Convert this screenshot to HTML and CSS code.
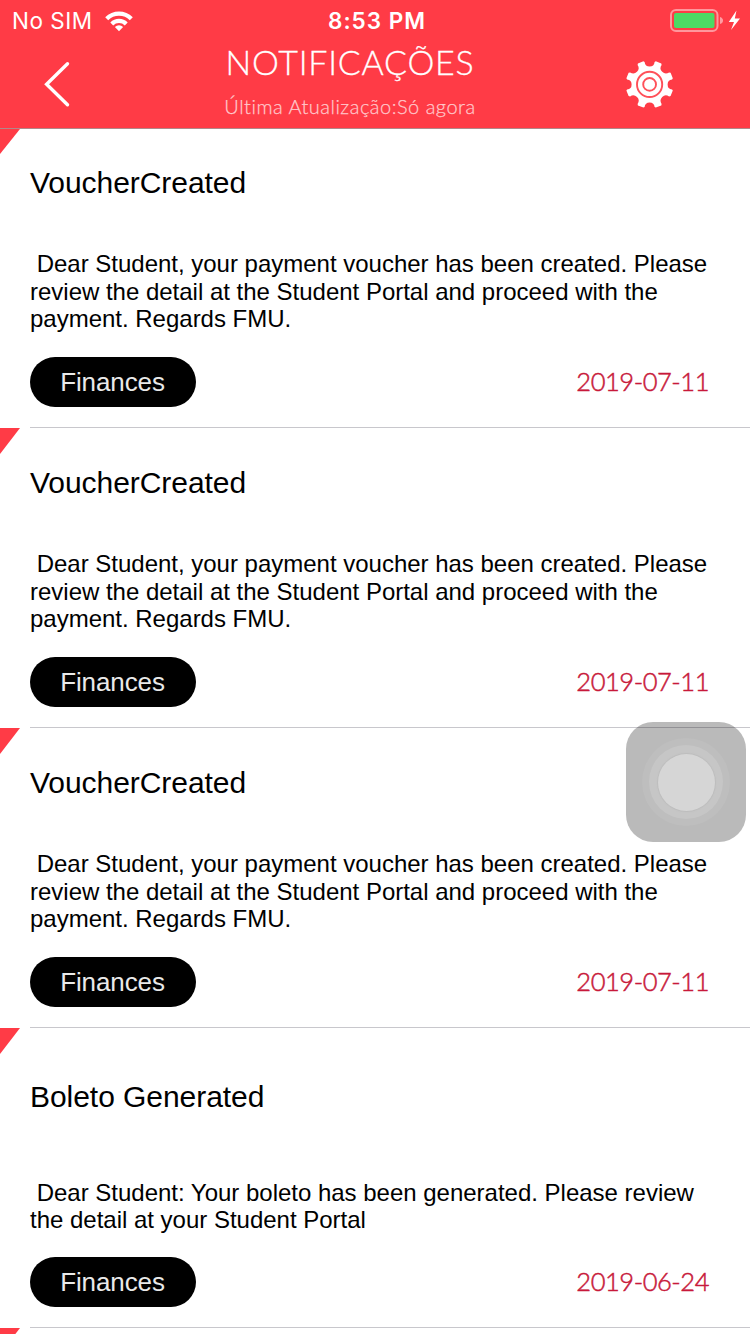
FILE: index.html
```html
<!DOCTYPE html>
<html lang="pt">
<head>
<meta charset="utf-8">
<title>Notificações</title>
<link rel="stylesheet" href="styles.css">
</head>
<body>
<div class="screen">
  <header class="header">
    <div class="status">
      <div class="carrier"><span>No SIM</span>
        <svg class="wifi" width="28" height="21" viewBox="0 0 28 21"><path d="M14 20.200L9.900 16a5.900 5.900 0 0 1 8.200 0zM5.300 11.400a12.400 12.400 0 0 1 17.400 0l-2.900 3a8.300 8.300 0 0 0-11.600 0zM.2 6.200a19.600 19.600 0 0 1 27.600 0l-3 3a15.300 15.300 0 0 0-21.600 0z" fill="#fff"/></svg>
      </div>
      <div class="time">8:53 PM</div>
      <svg class="battery" width="72" height="26" viewBox="0 0 72 26"><rect x="1" y="2" width="46.500" height="21" rx="5" fill="none" stroke="#fff" stroke-opacity=".47" stroke-width="2"/><rect x="4" y="5" width="40.500" height="15" rx="2" fill="#4cd964"/><path d="M50 9q3 1 3 3.500T50 16z" fill="#fff" fill-opacity=".5"/><path d="M66.500 2.500l-7.700 11.500h5.200l-3 8 9-11.400h-5.200z" fill="#fff"/></svg>
    </div>
    <div class="nav">
      <svg class="back" width="28" height="48" viewBox="0 0 28 48"><path d="M24.500 3.800L3.600 24.300 24.500 44.800" fill="none" stroke="#fff" stroke-width="3.400" stroke-linecap="round"/></svg>
      <div class="heading">
        <h1>NOTIFICAÇÕES</h1>
        <p>Última Atualização:Só agora</p>
      </div>
      <svg class="gear" width="48" height="48" viewBox="-24.600 -24.400 48 48">
        <path d="M-12-19.500L-11.700-21-6.200-23.200-5-22.500Q-4.500-18 0-18T5-22.500L6.200-23.200 11.700-21 12-19.500Q9.400-15.700 12.600-12.600T19.500-12L21-11.700 23.200-6.200 22.500-5Q18-4.500 18 0T22.500 5L23.200 6.200 21 11.700 19.500 12Q15.700 9.400 12.600 12.600T12 19.500L11.700 21 6.200 23.200 5 22.500Q4.500 18 0 18T-5 22.500L-6.200 23.200-11.700 21-12 19.500Q-9.400 15.700-12.600 12.600T-19.500 12L-21 11.700-23.200 6.200-22.500 5Q-18 4.500-18 0T-22.500-5L-23.200-6.200-21-11.700-19.500-12Q-15.700-9.400-12.600-12.600T-12-19.500z" fill="#fff"/>
        <circle r="12.600" fill="none" stroke="#ff5059" stroke-width="1.900"/>
        <circle r="6.400" fill="none" stroke="#ff5059" stroke-width="1.900"/>
      </svg>
    </div>
  </header>
  <main class="list">
    <article class="item">
      <h2>VoucherCreated</h2>
      <p class="body">&nbsp;Dear Student, your payment voucher has been created. Please<br>review the detail at the Student Portal and proceed with the<br>payment. Regards FMU.</p>
      <div class="meta"><span class="tag">Finances</span><time>2019-07-11</time></div>
    </article>
    <article class="item">
      <h2>VoucherCreated</h2>
      <p class="body">&nbsp;Dear Student, your payment voucher has been created. Please<br>review the detail at the Student Portal and proceed with the<br>payment. Regards FMU.</p>
      <div class="meta"><span class="tag">Finances</span><time>2019-07-11</time></div>
    </article>
    <article class="item">
      <h2>VoucherCreated</h2>
      <p class="body">&nbsp;Dear Student, your payment voucher has been created. Please<br>review the detail at the Student Portal and proceed with the<br>payment. Regards FMU.</p>
      <div class="meta"><span class="tag">Finances</span><time>2019-07-11</time></div>
    </article>
    <article class="item short">
      <h2>Boleto Generated</h2>
      <p class="body">&nbsp;Dear Student: Your boleto has been generated. Please review<br>the detail at your Student Portal</p>
      <div class="meta"><span class="tag">Finances</span><time>2019-06-24</time></div>
    </article>
    <article class="item next"></article>
  </main>
  <div class="assistive"><div class="ring"><div class="ring inner"><div class="dot"></div></div></div></div>
</div>
</body>
</html>
```
FILE: styles.css
```css
* { box-sizing: border-box; }
body { margin: 0; background: #fff; }
h1, h2, p { margin: 0; font-weight: 400; }
svg { display: block; flex: none; }

.screen {
  position: relative;
  width: 750px;
  height: 1334px;
  overflow: hidden;
  font-family: "Liberation Sans", Arial, sans-serif;
  color: #000;
}

.header {
  height: 129px;
  background: #ff3b46;
  border-bottom: 1px solid #b0888a;
  color: #fff;
}
.status {
  display: grid;
  grid-template-columns: 1fr auto 1fr;
  height: 40px;
  padding: 1px 8px 0 12px;
  align-items: center;
  font-family: Inter, sans-serif;
  font-size: 22.5px;
  line-height: 40px;
}
.carrier { display: flex; align-items: center; gap: 12px; letter-spacing: 0.5px; }
.time { font-weight: 600; letter-spacing: 1px; }
.battery { justify-self: end; }

.nav {
  display: grid;
  grid-template-columns: 225px 250px 1fr;
  height: 88px;
}
.back { margin: 20px 0 0 43px; }
.gear { margin: 20px 0 0 150px; overflow: visible; }
.heading {
  display: flex;
  flex-direction: column;
  align-items: center;
  font-family: Lato, sans-serif;
  font-weight: 300;
  font-variant-ligatures: none;
  white-space: nowrap;
}
.heading h1 {
  font-size: 34px;
  line-height: 44px;
  font-weight: 300;
  letter-spacing: 0.75px;
  -webkit-text-stroke: 0.3px #fff;
}
.heading p {
  margin-top: 9px;
  font-size: 20px;
  line-height: 26px;
  font-weight: 300;
  letter-spacing: 0.5px;
  color: #ffc8cb;
  -webkit-text-stroke: 0.25px #ffc8cb;
}

.item {
  display: flex;
  flex-direction: column;
  position: relative;
  height: 300px;
  padding: 35px 40px 0 30px;
}
.item:first-child { height: 299px; padding-top: 34px; }
.item::before {
  content: "";
  position: absolute;
  left: 0;
  top: 0;
  width: 20px;
  height: 26px;
  background: #ff3b46;
  clip-path: polygon(0 0, 100% 0, 0 100%);
}
.item:first-child::before { height: 25px; }
.item::after {
  content: "";
  position: absolute;
  left: 30px;
  right: 0;
  bottom: 0;
  height: 1px;
  background: #c8c7cc;
}
.item h2 {
  font-size: 30px;
  line-height: 40px;
  letter-spacing: -0.05px;
  white-space: nowrap;
}
.body {
  margin-top: 47px;
  font-size: 24px;
  line-height: 27.5px;
  letter-spacing: -0.01px;
  white-space: nowrap;
}
.short h2 { margin-top: 14px; }
.short .body { margin-top: 61.5px; }
.meta {
  display: flex;
  justify-content: space-between;
  align-items: center;
  margin-top: auto;
  margin-bottom: 21px;
}
.tag {
  width: 166px;
  height: 50px;
  padding-right: 1px;
  border-radius: 25px;
  background: #000;
  color: #e9e9e9;
  font-size: 26px;
  line-height: 51px;
  letter-spacing: -0.1px;
  text-align: center;
}
time {
  margin: 0 1px 2px 0;
  font-family: Lato, sans-serif;
  font-weight: 300;
  font-size: 25.5px;
  letter-spacing: -0.45px;
  color: #c8193a;
  -webkit-text-stroke: 0.5px #c8193a;
}

.assistive {
  position: absolute;
  left: 626px;
  top: 722px;
  display: grid;
  place-items: center;
  width: 120px;
  height: 120px;
  border-radius: 27px;
  background: rgba(0, 0, 0, 0.27);
}
.ring {
  display: grid;
  place-items: center;
  width: 88px;
  height: 88px;
  border-radius: 50%;
  background: rgba(255, 255, 255, 0.06);
}
.inner { width: 74px; height: 74px; background: rgba(255, 255, 255, 0.13); }
.dot {
  width: 57px;
  height: 57px;
  border-radius: 50%;
  background: #d6d6d6;
  box-shadow: 0 0 1px 1px #bdbdbd;
}
```
